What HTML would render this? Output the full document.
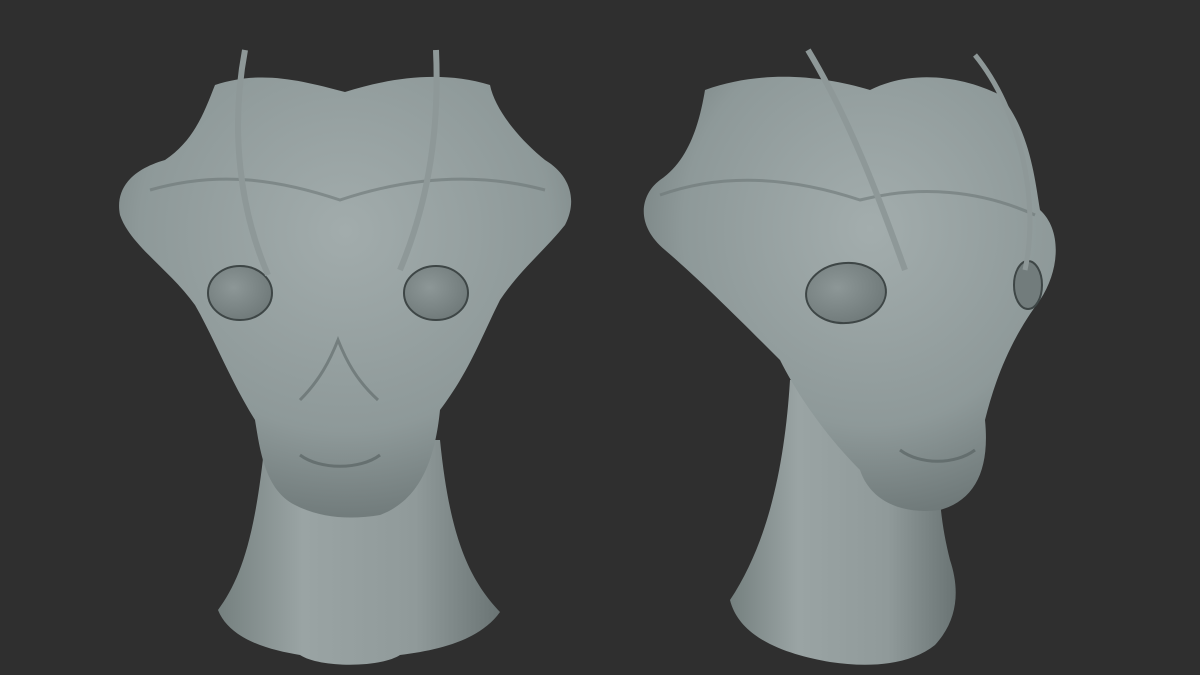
<!DOCTYPE html>
<html><head><style>html,body{margin:0;padding:0;background:#2f2f2f;width:1200px;height:675px;overflow:hidden}</style></head>
<body>
<svg width="1200" height="675" viewBox="0 0 1200 675" xmlns="http://www.w3.org/2000/svg">
<defs>
<radialGradient id="g1" cx="0.5" cy="0.35" r="0.7">
<stop offset="0" stop-color="#a2acac"/><stop offset="0.65" stop-color="#8e9999"/><stop offset="1" stop-color="#6a7474"/></radialGradient>
<radialGradient id="g2" cx="0.55" cy="0.35" r="0.7">
<stop offset="0" stop-color="#a3adad"/><stop offset="0.65" stop-color="#8e9999"/><stop offset="1" stop-color="#6a7474"/></radialGradient>
<linearGradient id="n1" x1="0" x2="1"><stop offset="0" stop-color="#75807f"/><stop offset="0.3" stop-color="#9aa4a4"/><stop offset="0.7" stop-color="#909a9a"/><stop offset="1" stop-color="#6a7474"/></linearGradient>
<radialGradient id="eye" cx="0.4" cy="0.4" r="0.7"><stop offset="0" stop-color="#8d9797"/><stop offset="1" stop-color="#6d7777"/></radialGradient>
</defs>
<!-- Left neck -->
<path d="M265 440 C255 540 240 580 218 610 C230 640 270 650 300 655 C320 668 380 668 400 655 C440 650 480 640 500 612 C470 580 450 540 440 440 Z" fill="url(#n1)"/>
<!-- Left head -->
<path d="M215 85 C260 70 300 80 345 92 C390 78 440 70 490 85 C495 110 520 140 545 160 C570 175 578 200 565 225 C545 250 520 270 500 300 C480 340 470 370 440 410 C435 460 420 500 380 515 C350 520 320 518 295 505 C265 490 260 450 255 420 C230 380 215 340 195 305 C170 270 130 245 120 215 C115 190 130 170 165 160 C195 140 205 110 215 85 Z" fill="url(#g1)"/>
<path d="M150 190 C220 170 280 180 340 200 C400 180 470 170 545 190" stroke="#6c7676" stroke-width="3" fill="none" opacity="0.6"/>
<path d="M300 400 C320 380 330 360 338 340 C346 360 356 380 378 400" stroke="#5e6868" stroke-width="3" fill="none" opacity="0.6"/>
<path d="M300 455 C320 470 360 470 380 455" stroke="#5a6464" stroke-width="3" fill="none" opacity="0.7"/>
<ellipse cx="240" cy="293" rx="32" ry="27" fill="url(#eye)" stroke="#3e4646" stroke-width="2"/>
<ellipse cx="436" cy="293" rx="32" ry="27" fill="url(#eye)" stroke="#3e4646" stroke-width="2"/>
<path d="M245 50 C230 130 240 210 268 275" stroke="#8e9898" stroke-width="6" fill="none"/>
<path d="M436 50 C440 140 425 210 400 270" stroke="#8e9898" stroke-width="6" fill="none"/>
<!-- Right neck -->
<path d="M790 380 C785 460 770 540 730 600 C740 640 790 655 830 662 C870 668 910 665 935 645 C958 620 960 590 950 560 C940 520 935 480 940 380 Z" fill="url(#n1)"/>
<!-- Right head -->
<path d="M705 90 C760 70 820 75 870 90 C910 70 960 75 1000 95 C1030 130 1035 180 1040 210 C1062 230 1060 270 1040 300 C1010 340 995 380 985 420 C990 470 975 500 940 510 C900 515 870 500 860 470 C830 440 800 400 780 360 C740 320 700 280 665 250 C635 225 640 195 660 180 C690 160 700 120 705 90 Z" fill="url(#g2)"/>
<path d="M660 195 C730 170 800 180 860 200 C920 185 980 190 1035 215" stroke="#6c7676" stroke-width="3" fill="none" opacity="0.6"/>
<path d="M900 450 C920 465 955 465 975 450" stroke="#5a6464" stroke-width="3" fill="none" opacity="0.7"/>
<ellipse cx="846" cy="293" rx="40" ry="30" fill="url(#eye)" stroke="#3e4646" stroke-width="2" transform="rotate(-5 846 293)"/>
<ellipse cx="1028" cy="285" rx="14" ry="24" fill="#727c7c" stroke="#3e4646" stroke-width="2"/>
<path d="M808 50 C850 120 880 200 905 270" stroke="#8e9898" stroke-width="6" fill="none"/>
<path d="M975 55 C1020 110 1040 200 1025 270" stroke="#8e9898" stroke-width="5" fill="none"/>
</svg>
</body></html>
